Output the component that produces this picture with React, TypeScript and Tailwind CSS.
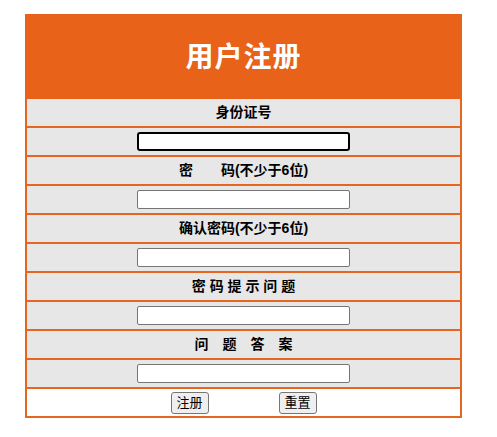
const font = { fontFamily: '"Liberation Sans", "Noto Sans CJK SC", sans-serif' };

function LabelRow({ children }: { children: React.ReactNode }) {
  return (
    <div className="flex h-[29px] items-center justify-center border-b-2 border-[#e4661f] bg-[#e7e7e7] text-[14px] font-bold text-black">
      {children}
    </div>
  );
}

function InputRow({ focused = false, type = 'text' }: { focused?: boolean; type?: string }) {
  return (
    <div className="flex h-[29px] items-center justify-center border-b-2 border-[#e4661f] bg-[#e7e7e7]">
      <input
        type={type}
        className={
          focused
            ? 'h-[19px] w-[213px] rounded-[3px] border-2 border-black bg-white px-[2px] outline-none'
            : 'h-[19px] w-[213px] rounded-[2px] border border-[#767676] bg-white px-[2px] outline-none'
        }
      />
    </div>
  );
}

export default function App() {
  return (
    <div className="min-h-[437px] bg-white pt-[14px]" style={font}>
      <div className="ml-[25px] w-[437px] border-x-2 border-b-2 border-[#e4661f]">
        <div className="-mx-[2px] flex h-[85px] items-center justify-center bg-[#e8621a]">
          <h1 className="mt-[2px] text-[28px] font-bold tracking-[1px] text-white">用户注册</h1>
        </div>
        <LabelRow>身份证号</LabelRow>
        <InputRow focused />
        <LabelRow>密　　码(不少于6位)</LabelRow>
        <InputRow type="password" />
        <LabelRow>确认密码(不少于6位)</LabelRow>
        <InputRow type="password" />
        <LabelRow>密 码 提 示 问 题</LabelRow>
        <InputRow />
        <LabelRow>问　题　答　案</LabelRow>
        <InputRow />
        <div className="flex h-[27px] items-center justify-center gap-[70px] bg-white">
          <button className="h-[22px] w-[38px] rounded-[3px] border border-[#767676] bg-[#efefef] text-[13px] text-black">
            注册
          </button>
          <button className="h-[22px] w-[38px] rounded-[3px] border border-[#767676] bg-[#efefef] text-[13px] text-black">
            重置
          </button>
        </div>
      </div>
    </div>
  );
}
